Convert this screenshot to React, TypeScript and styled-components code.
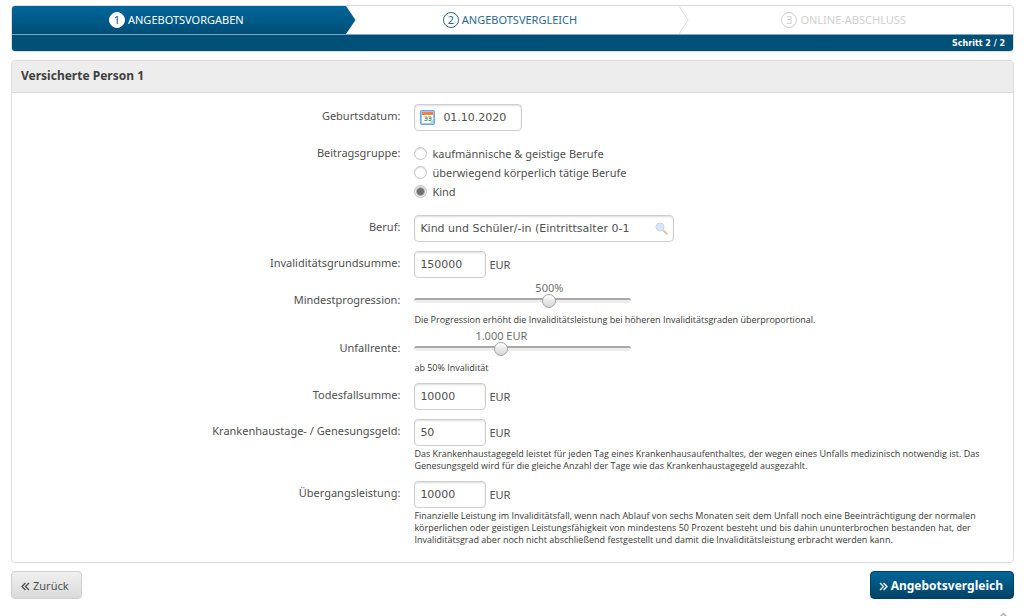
import React, { useId, useState } from "react";
import styled, { createGlobalStyle, css } from "styled-components";

const GlobalStyle = createGlobalStyle`
  *, *::before, *::after { box-sizing: border-box; }
  body {
    margin: 0;
    background: #fff;
    color: #505050;
    font-family: "Noto Sans", Tahoma, sans-serif;
    font-size: 11px;
    line-height: 14px;
  }
  button, input { font-family: inherit; font-size: inherit; color: inherit; }
`;

const Page = styled.div`
  padding: 5px 10px 0 11px;
  height: 100vh;
  overflow: hidden;
`;

const Stepper = styled.nav`
  border: 1px solid #dcdcdc;
  border-radius: 4px;
  overflow: hidden;
`;

const Steps = styled.ol`
  display: grid;
  grid-template-columns: repeat(3, 1fr);
  margin: 0;
  padding: 0;
  list-style: none;
`;

type StepState = "active" | "next" | "disabled";

const stepColors = {
  active: css`
    background: linear-gradient(#00669a, #004e76);
    color: #fff;
  `,
  next: css`
    color: #2c6a8f;
  `,
  disabled: css`
    color: #cfcfcf;
  `,
};

const Step = styled.li<{ $state: StepState }>`
  position: relative;
  display: flex;
  align-items: center;
  justify-content: center;
  gap: 3px;
  height: 28px;
  padding-right: 5px;
  ${({ $state }) => stepColors[$state]}
`;

const StepNumber = styled.span<{ $filled: boolean }>`
  display: flex;
  align-items: center;
  justify-content: center;
  width: 16px;
  height: 16px;
  border: 1px solid currentColor;
  border-radius: 50%;
  line-height: 14px;
  ${({ $filled }) =>
    $filled &&
    css`
      border-color: #fff;
      background: #fff;
      color: #00557f;
    `}
`;

const StepArrow = styled.svg`
  position: absolute;
  z-index: 1;
  top: 0;
  right: -10px;
  width: 11px;
  height: 28px;
`;

const StepInfo = styled.div`
  height: 17px;
  padding: 0 8px;
  border-top: 1px solid #7fa6ba;
  background: #005078;
  color: #fff;
  font-family: "DejaVu Sans", Verdana, sans-serif;
  font-size: 8px;
  font-weight: bold;
  line-height: 17px;
  text-align: right;
`;

const Panel = styled.section`
  margin-top: 8px;
  border: 1px solid #dcdcdc;
  border-radius: 4px;
  overflow: hidden;
`;

const PanelTitle = styled.h2`
  margin: 0;
  padding: 0 9px 1px;
  border-bottom: 1px solid #dcdcdc;
  background: #ededed;
  color: #404040;
  font-size: 12px;
  line-height: 30px;
`;

const PanelBody = styled.div`
  padding: 7px 0 11px;
`;

type RowKind = "input" | "radios" | "slider";

const rowPadding = {
  input: "4px 0 5px",
  radios: "8px 0 10px",
  slider: "0 0 5px",
};

const Row = styled.div<{ $kind: RowKind }>`
  display: grid;
  grid-template-columns: 39% 1fr;
  column-gap: 12px;
  padding: ${({ $kind }) => rowPadding[$kind]};
`;

const labelLine = { input: 24, radios: 17, slider: 14 };

const labelStyle = css<{ $kind: RowKind }>`
  padding: ${({ $kind }) => ($kind === "slider" ? "10px" : "0")} 2px 0 0;
  line-height: ${({ $kind }) => labelLine[$kind]}px;
  text-align: right;
`;

const Label = styled.label<{ $kind: RowKind }>`
  ${labelStyle}
`;

const GroupLabel = styled.span<{ $kind: RowKind }>`
  ${labelStyle}
`;

const Line = styled.div`
  display: flex;
  align-items: center;
  gap: 3px;
`;

const Box = styled.div<{ $width: number }>`
  display: flex;
  align-items: center;
  gap: 8px;
  width: ${({ $width }) => $width}px;
  height: 27px;
  padding: 0 5px;
  border: 1px solid #cfcfcf;
  border-radius: 4px;
  background: #fff;
  box-shadow: inset 0 1px 2px #dedede;
`;

const TextInput = styled.input`
  flex: 1;
  min-width: 0;
  padding: 0;
  border: 0;
  outline: 0;
  background: none;
  font-family: "DejaVu Sans", Verdana, sans-serif;
`;

const Note = styled.p<{ $gap: number }>`
  max-width: 580px;
  margin: ${({ $gap }) => $gap}px 0 0;
  color: #383838;
  font-family: "Open Sans", Verdana, sans-serif;
  font-size: 9px;
  line-height: 12px;
`;

const RadioLabel = styled.label`
  display: flex;
  align-items: center;
  gap: 5px;
  height: 19px;
`;

const Radio = styled.input`
  appearance: none;
  width: 13px;
  height: 13px;
  margin: 0;
  border: 1px solid #c4c4c4;
  border-radius: 50%;
  background: #fff;
  box-shadow: inset 0 1px 1px #dedede;

  &:checked {
    background: radial-gradient(circle, #707070 0 3px, #ececec 5px);
  }
`;

const SliderBox = styled.div`
  width: 217px;
`;

const SliderValue = styled.output`
  display: block;
  width: 80px;
  color: #707070;
  line-height: 10px;
  text-align: center;
`;

const Range = styled.input`
  appearance: none;
  display: block;
  width: 100%;
  height: 14px;
  margin: 0;
  background: none;

  &::-webkit-slider-runnable-track {
    height: 5px;
    border-top: 2px solid #a8a8a8;
    border-radius: 3px;
    background: #ececec;
  }

  &::-webkit-slider-thumb {
    appearance: none;
    width: 14px;
    height: 14px;
    margin-top: -6px;
    border: 1px solid #a4a4a4;
    border-radius: 50%;
    background: linear-gradient(#fff, #d4d4d4);
  }
`;

const Actions = styled.div`
  display: flex;
  justify-content: space-between;
  margin-top: 8px;
`;

const Button = styled.button<{ $primary?: boolean }>`
  display: flex;
  align-items: center;
  gap: 3px;
  height: 28px;
  padding: 0 12px 0 9px;
  border: 1px solid #d0d0d0;
  border-radius: 4px;
  background: linear-gradient(#f0f0f0, #dadada);
  ${({ $primary }) =>
    $primary &&
    css`
      padding: 0 10px 0 8px;
      border-color: #00405f;
      background: linear-gradient(#00669a, #004366);
      color: #fff;
      font-size: 12px;
      font-weight: bold;
    `}
`;

const ButtonIcon = styled.svg`
  width: 9px;
  height: 9px;
  margin-top: 3px;
`;

const ToTop = styled.a`
  display: block;
  width: 9px;
  margin: 13px 6px 0 auto;
  color: #b5b5b5;
  line-height: 0;
`;

function CalendarIcon() {
  return (
    <svg width="15" height="15" viewBox="0 0 15 15" aria-hidden="true">
      <rect x="0.5" y="0.5" width="14" height="14" rx="1" fill="#9fc2ef" stroke="#7aa5df" />
      <rect x="2" y="2" width="11" height="11" fill="#fff" />
      <rect x="2" y="2" width="11" height="3" fill="#f4803a" />
      <path
        d="M4.500 7h2.500v3.500H4.500M5 8.700h2M8.500 7H11v3.500H8.500M9 8.700h2"
        fill="none"
        stroke="#55a05a"
      />
      <path d="M13 9.500V13H9.500z" fill="#b9d2f3" />
    </svg>
  );
}

function SearchIcon() {
  return (
    <svg width="13" height="13" viewBox="0 0 13 13" aria-hidden="true">
      <path d="M8 8l3.500 3.500" stroke="#e6c8a2" strokeWidth="2.400" strokeLinecap="round" />
      <circle cx="5" cy="5" r="4" fill="#d3e6fa" stroke="#c4d8f0" />
    </svg>
  );
}

function DoubleChevron({ back }: { back?: boolean }) {
  return (
    <ButtonIcon viewBox="0 0 9 9" aria-hidden="true">
      <path
        d={back ? "M4.500 1L1 4.500 4.500 8M8 1L4.500 4.500 8 8" : "M1 1l3.500 3.500L1 8M4.500 1L8 4.500 4.500 8"}
        fill="none"
        stroke="currentColor"
        strokeWidth="1.300"
      />
    </ButtonIcon>
  );
}

function AmountRow({ label, value, note }: { label: string; value: string; note?: string }) {
  const id = useId();
  return (
    <Row $kind="input">
      <Label $kind="input" htmlFor={id}>{label}</Label>
      <div>
        <Line>
          <Box $width={72}>
            <TextInput id={id} defaultValue={value} />
          </Box>
          <span>EUR</span>
        </Line>
        {note && <Note $gap={2}>{note}</Note>}
      </div>
    </Row>
  );
}

interface SliderRowProps {
  label: string;
  initial: number;
  max: number;
  step: number;
  format: (value: number) => string;
  note: string;
}

function SliderRow({ label, initial, max, step, format, note }: SliderRowProps) {
  const id = useId();
  const [value, setValue] = useState(initial);
  const center = 7 + Math.round((value / max) * 203);
  return (
    <Row $kind="slider">
      <Label $kind="slider" htmlFor={id}>{label}</Label>
      <div>
        <SliderBox>
          <SliderValue htmlFor={id} style={{ marginLeft: center - 40 }}>{format(value)}</SliderValue>
          <Range
            id={id}
            type="range"
            min={0}
            max={max}
            step={step}
            value={value}
            onChange={(e) => setValue(Number(e.target.value))}
          />
        </SliderBox>
        <Note $gap={7}>{note}</Note>
      </div>
    </Row>
  );
}

const groups = ["kaufmännische & geistige Berufe", "überwiegend körperlich tätige Berufe", "Kind"];

export default function App() {
  return (
    <>
      <GlobalStyle />
      <Page>
        <Stepper>
          <Steps>
            <Step $state="active" aria-current="step">
              <StepNumber $filled>1</StepNumber>
              ANGEBOTSVORGABEN
              <StepArrow viewBox="0 0 11 28" aria-hidden="true">
                <defs>
                  <linearGradient id="arrow" x1="0" y1="0" x2="0" y2="1">
                    <stop offset="0" stopColor="#00669a" />
                    <stop offset="1" stopColor="#004e76" />
                  </linearGradient>
                </defs>
                <path d="M0 0h1l9.500 14L1 28H0z" fill="url(#arrow)" />
              </StepArrow>
            </Step>
            <Step $state="next">
              <StepNumber $filled={false}>2</StepNumber>
              ANGEBOTSVERGLEICH
              <StepArrow viewBox="0 0 11 28" aria-hidden="true">
                <path d="M1 0l9 14L1 28" fill="none" stroke="#dcdcdc" />
              </StepArrow>
            </Step>
            <Step $state="disabled">
              <StepNumber $filled={false}>3</StepNumber>
              ONLINE-ABSCHLUSS
            </Step>
          </Steps>
          <StepInfo>Schritt 2 / 2</StepInfo>
        </Stepper>

        <Panel>
          <PanelTitle>Versicherte Person 1</PanelTitle>
          <PanelBody>
            <Row $kind="input">
              <Label $kind="input" htmlFor="birth">Geburtsdatum:</Label>
              <Box $width={108}>
                <CalendarIcon />
                <TextInput id="birth" defaultValue="01.10.2020" />
              </Box>
            </Row>
            <Row $kind="radios" role="radiogroup" aria-labelledby="group-label">
              <GroupLabel $kind="radios" id="group-label">Beitragsgruppe:</GroupLabel>
              <div>
                {groups.map((name) => (
                  <RadioLabel key={name}>
                    <Radio type="radio" name="group" defaultChecked={name === "Kind"} />
                    {name}
                  </RadioLabel>
                ))}
              </div>
            </Row>
            <Row $kind="input">
              <Label $kind="input" htmlFor="job">Beruf:</Label>
              <Box $width={260}>
                <TextInput id="job" defaultValue="Kind und Schüler/-in (Eintrittsalter 0-1" />
                <SearchIcon />
              </Box>
            </Row>
            <AmountRow label="Invaliditätsgrundsumme:" value="150000" />
            <SliderRow
              label="Mindestprogression:"
              initial={63}
              max={100}
              step={1}
              format={(v) => `${Math.round((v * 500) / 63)}%`}
              note="Die Progression erhöht die Invaliditätsleistung bei höheren Invaliditätsgraden überproportional."
            />
            <SliderRow
              label="Unfallrente:"
              initial={1000}
              max={2550}
              step={50}
              format={(v) => `${v.toLocaleString("de-DE")} EUR`}
              note="ab 50% Invalidität"
            />
            <AmountRow label="Todesfallsumme:" value="10000" />
            <AmountRow
              label="Krankenhaustage- / Genesungsgeld:"
              value="50"
              note="Das Krankenhaustagegeld leistet für jeden Tag eines Krankenhausaufenthaltes, der wegen eines Unfalls medizinisch notwendig ist. Das Genesungsgeld wird für die gleiche Anzahl der Tage wie das Krankenhaustagegeld ausgezahlt."
            />
            <AmountRow
              label="Übergangsleistung:"
              value="10000"
              note="Finanzielle Leistung im Invaliditätsfall, wenn nach Ablauf von sechs Monaten seit dem Unfall noch eine Beeinträchtigung der normalen körperlichen oder geistigen Leistungsfähigkeit von mindestens 50 Prozent besteht und bis dahin ununterbrochen bestanden hat, der Invaliditätsgrad aber noch nicht abschließend festgestellt und damit die Invaliditätsleistung erbracht werden kann."
            />
          </PanelBody>
        </Panel>

        <Actions>
          <Button type="button">
            <DoubleChevron back />
            Zurück
          </Button>
          <Button type="button" $primary>
            <DoubleChevron />
            Angebotsvergleich
          </Button>
        </Actions>
        <ToTop href="#top" aria-label="Nach oben">
          <svg width="9" height="6" viewBox="0 0 9 6" aria-hidden="true">
            <path d="M1 5l3.500-3.500L8 5" fill="none" stroke="currentColor" strokeWidth="1.500" />
          </svg>
        </ToTop>
      </Page>
    </>
  );
}
